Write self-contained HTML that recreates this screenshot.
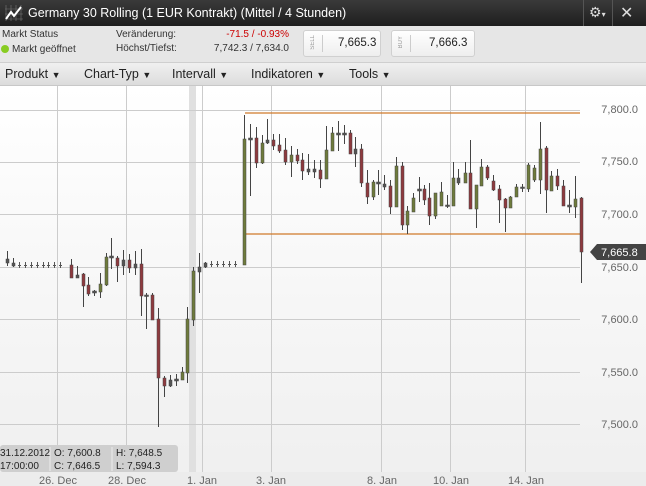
<!DOCTYPE html>
<html><head><meta charset="utf-8"><style>
*{margin:0;padding:0;box-sizing:border-box}
body{width:646px;height:486px;overflow:hidden;font-family:"Liberation Sans",sans-serif;background:#fff;position:relative}
span{white-space:nowrap}
.title{position:absolute;left:0;top:0;width:646px;height:26px;background:linear-gradient(#3a3a3a,#1e1e1e);color:#fff;font-size:12.5px}
.title .t{position:absolute;left:28px;top:6px}
.info{position:absolute;left:0;top:26px;width:646px;height:36px;background:#e6e6e6;font-size:10px;color:#333}
.menu{position:absolute;left:0;top:62px;width:646px;height:24px;background:linear-gradient(#f0f0f0,#dcdcdc);border-top:1px solid #cfcfcf;border-bottom:1px solid #c8c8c8;font-size:12.5px;color:#222}
.menu span{position:absolute;top:4px}
.btn{position:absolute;top:4px;height:27px;background:linear-gradient(#fff,#eee);border:1px solid #d0d0d0;border-radius:3px;font-size:11.5px;color:#222}
</style></head><body>
<div class="title">
<svg style="position:absolute;left:4px;top:4px" width="20" height="18"><g stroke="#777" stroke-width="0.6" fill="none"><path d="M2 1v16M7 1v16M12 1v16M17 1v16M1 5h18M1 10h18M1 15h18"/></g><path d="M2 15L7 8L10 12L17 3" stroke="#fff" stroke-width="2" fill="none"/></svg>
<span class="t">Germany 30 Rolling (1 EUR Kontrakt) (Mittel / 4 Stunden)</span>
<div style="position:absolute;left:583px;top:0;width:1px;height:26px;background:#555"></div>
<span style="position:absolute;left:589px;top:4px;font-size:14px;color:#ddd">⚙<span style="font-size:8px">▾</span></span>
<div style="position:absolute;left:612px;top:0;width:1px;height:26px;background:#555"></div>
<span style="position:absolute;left:620px;top:3px;font-size:16px;color:#ddd">✕</span>
</div>
<div class="info">
<span style="position:absolute;left:2px;top:3px">Markt Status</span>
<span style="position:absolute;left:1px;top:19px;width:8px;height:8px;border-radius:50%;background:#8c2;display:block"></span>
<span style="position:absolute;left:12px;top:18px">Markt geöffnet</span>
<span style="position:absolute;left:116px;top:3px">Veränderung:</span>
<span style="position:absolute;left:116px;top:17px">Höchst/Tiefst:</span>
<span style="position:absolute;left:200px;top:3px;color:#c00;width:89px;text-align:right">-71.5 / -0.93%</span>
<span style="position:absolute;left:200px;top:17px;width:89px;text-align:right">7,742.3 / 7,634.0</span>
<div class="btn" style="left:303px;width:78px"><span style="position:absolute;left:6px;top:4px;font-size:6px;color:#999;writing-mode:vertical-rl;transform:rotate(180deg)">SELL</span><div style="position:absolute;left:18px;top:4px;width:1px;height:17px;background:#ccc"></div><span style="position:absolute;left:34px;top:6px">7,665.3</span></div>
<div class="btn" style="left:391px;width:84px"><span style="position:absolute;left:6px;top:5px;font-size:6px;color:#999;writing-mode:vertical-rl;transform:rotate(180deg)">BUY</span><div style="position:absolute;left:18px;top:4px;width:1px;height:17px;background:#ccc"></div><span style="position:absolute;left:37px;top:6px">7,666.3</span></div>
</div>
<div class="menu">
<span style="left:5px">Produkt <small style="font-size:9px">▼</small></span>
<span style="left:84px">Chart-Typ <small style="font-size:9px">▼</small></span>
<span style="left:172px">Intervall <small style="font-size:9px">▼</small></span>
<span style="left:251px">Indikatoren <small style="font-size:9px">▼</small></span>
<span style="left:349px">Tools <small style="font-size:9px">▼</small></span>
</div>
<svg id="c" style="position:absolute;left:0;top:86px" width="646" height="400" viewBox="0 86 646 400">
<defs><linearGradient id="bg" x1="0" y1="0" x2="0" y2="1"><stop offset="0" stop-color="#fff"/><stop offset="1" stop-color="#efefef"/></linearGradient></defs>
<rect x="0" y="86" width="646" height="400" fill="url(#bg)"/>
<rect x="189" y="86" width="7" height="386" fill="#e0e0e0"/>
<g stroke="#ccc" stroke-width="1">
<path d="M0 110.5H580M0 162.5H580M0 214.5H580M0 267.5H580M0 319.5H580M0 372.5H580M0 424.5H580"/>
<path d="M57.5 86V478M126.5 86V478M202.5 86V478M271.5 86V478M381.5 86V478M450.5 86V478M525.5 86V478"/>
</g>
<g stroke="#d07a2a" stroke-width="1.3"><path d="M245 113H580M245 234H580"/></g>
<g id="cd"></g>
<g font-size="11" fill="#666" text-anchor="end" font-family="Liberation Sans">
<text x="638" y="113">7,800.0</text><text x="638" y="165">7,750.0</text><text x="638" y="218">7,700.0</text><text x="638" y="271">7,650.0</text><text x="638" y="323">7,600.0</text><text x="638" y="376">7,550.0</text><text x="638" y="428">7,500.0</text>
</g>
<path d="M590 252L597 244H646V260H597Z" fill="#444"/>
<text x="601" y="256" font-size="11" fill="#fff" font-family="Liberation Sans">7,665.8</text>
<rect x="0" y="472" width="646" height="14" fill="#ececec"/>
<g font-size="11" fill="#666" text-anchor="middle" font-family="Liberation Sans">
<text x="58" y="484">26. Dec</text><text x="127" y="484">28. Dec</text><text x="202" y="484">1. Jan</text><text x="271" y="484">3. Jan</text><text x="382" y="484">8. Jan</text><text x="451" y="484">10. Jan</text><text x="526" y="484">14. Jan</text>
</g>
<rect x="0" y="445" width="178" height="27" rx="3" fill="#cfcfcf"/>
<path d="M50 447V471M112 447V471" stroke="#eee"/>
<g font-size="10" fill="#222" font-family="Liberation Sans">
<text x="0" y="456">31.12.2012</text><text x="0" y="469">17:00:00</text>
<text x="54" y="456">O:  7,600.8</text><text x="54" y="469">C:  7,646.5</text>
<text x="116" y="456">H:  7,648.5</text><text x="116" y="469">L:  7,594.3</text>
</g>
</svg>
<script>
var G='#6e7b3c',R='#8e3a3e',N='#555';
var d=[[7,259,263,251,266,N],[13,263,266,258,267,N],
[71,265,278,259,278,R],[77,275,278,266,278,N],[83,274,286,273,307,R],[88,285,294,277,296,R],[94,291,293,290,296,N],[100,284,292,273,298,G],[106,257,285,253,286,G],[111,256,258,238,269,N],[117,258,266,256,282,R],[123,260,266,250,275,N],[129,260,268,254,273,R],[135,264,268,251,275,N],[141,264,296,249,316,R],[146,295,296,293,329,N],[152,295,320,293,320,R],[158,319,378,308,427,R],[164,378,386,376,397,R],[170,380,386,375,387,N],[176,379,381,374,386,N],[182,372,380,367,380,G],[187,319,373,307,383,G],[193,271,320,267,326,G],[199,267,272,253,293,N],[205,263,267,262,268,N],
[244,139,265,115,265,G],[250,138,140,124,196,N],[256,138,163,127,168,R],[262,143,163,135,164,G],[267,140,143,119,144,N],[273,140,146,134,150,R],[279,145,151,134,153,R],[285,150,162,138,165,R],[291,155,162,146,177,G],[297,155,161,149,164,R],[302,160,171,153,180,R],[308,169,172,154,175,N],[314,169,172,160,178,N],[320,170,179,160,188,R],[326,150,179,126,179,G],[332,133,151,127,151,G],[338,133,135,121,151,N],[344,133,135,125,144,N],[350,133,154,130,154,R],[355,149,154,137,167,N],[361,149,183,144,187,R],[367,183,197,170,204,R],[373,182,197,180,200,G],[378,182,184,170,195,N],[384,184,187,175,190,N],[390,186,207,180,214,R],[396,166,207,157,207,G],[402,166,225,162,230,R],[407,211,225,206,234,G],[413,198,212,193,212,G],[419,189,191,177,202,N],[424,189,200,185,205,R],
[429,198,216,183,225,R],[435,193,216,193,219,G],[441,192,206,182,206,G],[447,205,206,195,208,N],[453,178,206,162,206,G],[458,178,183,169,185,N],[465,173,183,162,183,G],[470,173,209,140,209,R],[476,185,209,185,228,G],[481,167,186,159,186,G],[487,167,178,165,180,R],[493,181,190,175,191,R],[499,189,200,185,223,R],[505,199,208,198,232,R],[510,197,208,196,208,G],[516,187,197,184,197,G],
[522,187,188,184,192,N],[528,165,189,163,192,G],[534,168,180,165,182,G],[540,149,180,122,194,G],[546,148,190,146,213,R],[551,176,191,171,191,G],[557,176,186,169,190,R],[563,186,206,180,206,R],[569,205,207,190,213,N],[575,199,207,176,218,G],[581,198,252,197,283,R]];
var t=[];
for(var x=19;x<=66;x+=5.9)t.push(Math.round(x));
for(var x=211;x<=240;x+=5.9)t.push(Math.round(x));
var s='';
t.forEach(function(x){var y=x<100?265:264;s+='<path d="M'+(x+.5)+' '+(y-3)+'V'+(y+3)+'M'+(x-1)+' '+(y+.5)+'H'+(x+2)+'" stroke="#555"/>';});
d.forEach(function(c){s+='<line x1="'+(c[0]+.5)+'" x2="'+(c[0]+.5)+'" y1="'+c[3]+'" y2="'+c[4]+'" stroke="#444"/>';var h=Math.max(c[2]-c[1],1.5);var w=c[5]==N&&h<3?4:3;s+='<rect x="'+(c[0]-(w-1)/2)+'" y="'+c[1]+'" width="'+w+'" height="'+h+'" fill="'+(c[5]==N?'#555':c[5])+'" stroke="#444" stroke-width="0.5"/>';});
document.getElementById('cd').innerHTML=s;
</script>
</body></html>
